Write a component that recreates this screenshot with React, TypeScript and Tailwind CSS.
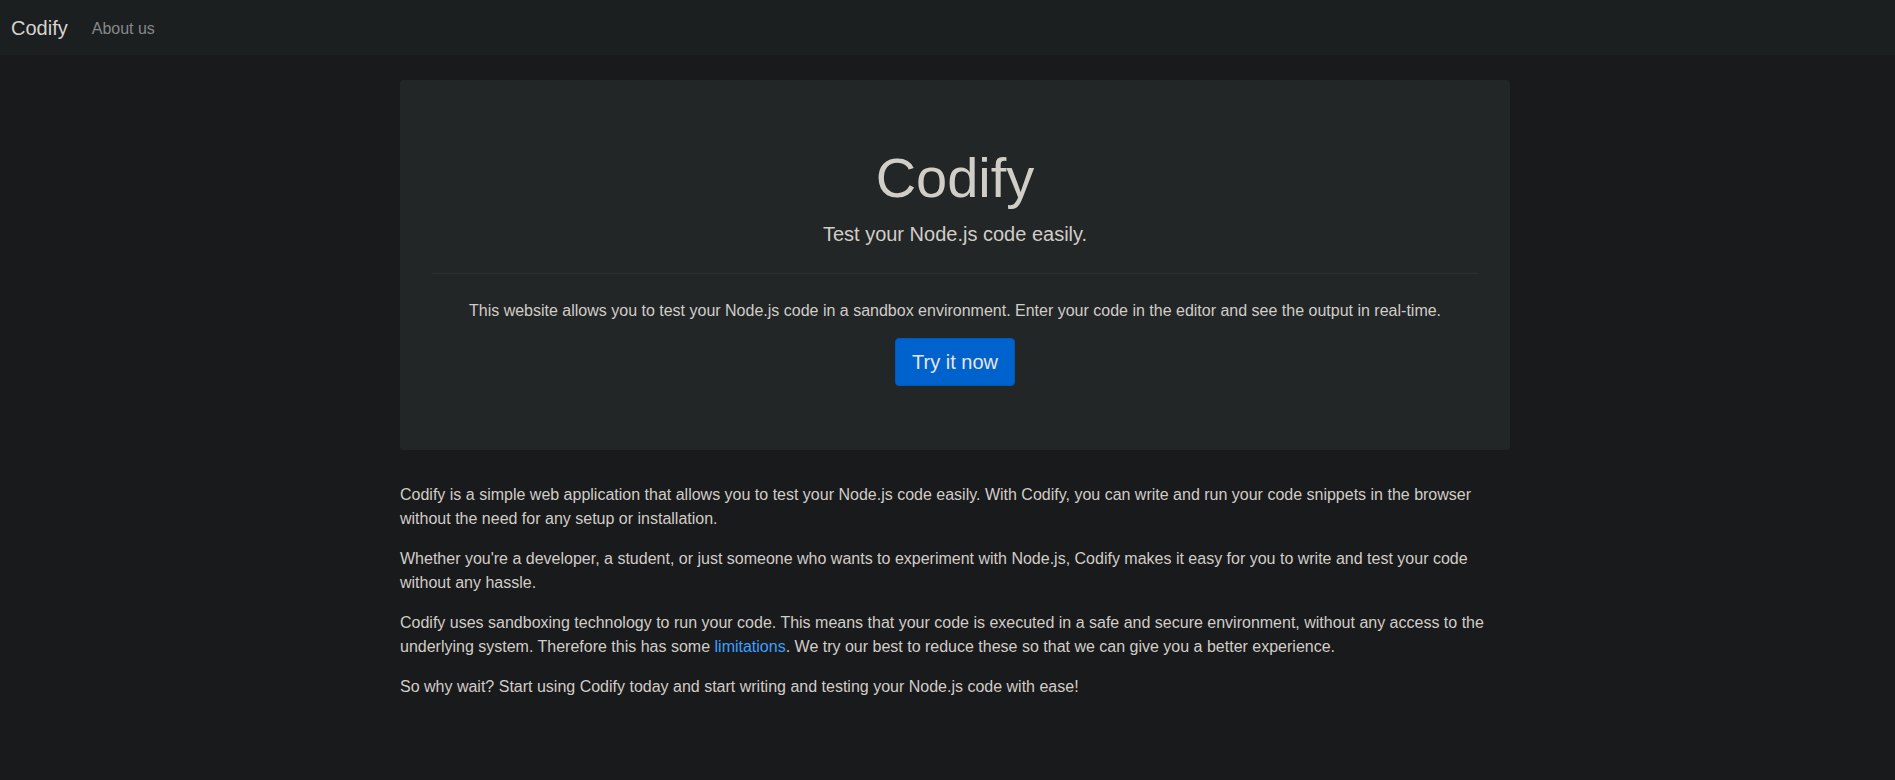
export default function App() {
  return (
    <div className="min-h-screen bg-[#191a1c] text-base text-[#d1cdc7] font-['Liberation_Sans',Arial,sans-serif]">
      <nav className="flex items-center bg-[#1b1f20] px-[11px] py-2">
        <a href="#" className="mr-4 text-xl leading-[38px] text-[#d8d4cf]">
          Codify
        </a>
        <a href="#about" className="pt-[9px] pb-[6px] pl-2 leading-6 text-[#87888a]">
          About us
        </a>
      </nav>
      <div className="pl-[15px]">
        <main className="mx-auto mt-[25px] max-w-[1140px] px-[15px]">
          <section className="mb-[33px] rounded bg-[#222627] px-8 py-16 text-center">
            <h1 className="mb-2 text-[56px] leading-[67px]">Codify</h1>
            <p className="text-xl leading-[30px]">Test your Node.js code easily.</p>
            <hr className="mt-6 mb-[25px] border-[#2b2f31]" />
            <p className="mb-[15px] leading-6">
              This website allows you to test your Node.js code in a sandbox environment. Enter your
              code in the editor and see the output in real-time.
            </p>
            <a
              href="#editor"
              className="inline-block rounded border border-[#0059b8] bg-[#0062cc] px-4 py-2 align-top text-xl leading-[30px] text-[#e8e6e3]"
            >
              Try it now
            </a>
          </section>
          <div className="space-y-4 leading-6">
            <p>
              Codify is a simple web application that allows you to test your Node.js code easily.
              With Codify, you can write and run your code snippets in the browser without the need
              for any setup or installation.
            </p>
            <p>
              Whether you're a developer, a student, or just someone who wants to experiment with
              Node.js, Codify makes it easy for you to write and test your code without any hassle.
            </p>
            <p>
              Codify uses sandboxing technology to run your code. This means that your code is
              executed in a safe and secure environment, without any access to the underlying
              system. Therefore this has some{' '}
              <a href="#limitations" className="text-[#3ca0ff]">
                limitations
              </a>
              . We try our best to reduce these so that we can give you a better experience.
            </p>
            <p>
              So why wait? Start using Codify today and start writing and testing your Node.js code
              with ease!
            </p>
          </div>
        </main>
      </div>
    </div>
  );
}
